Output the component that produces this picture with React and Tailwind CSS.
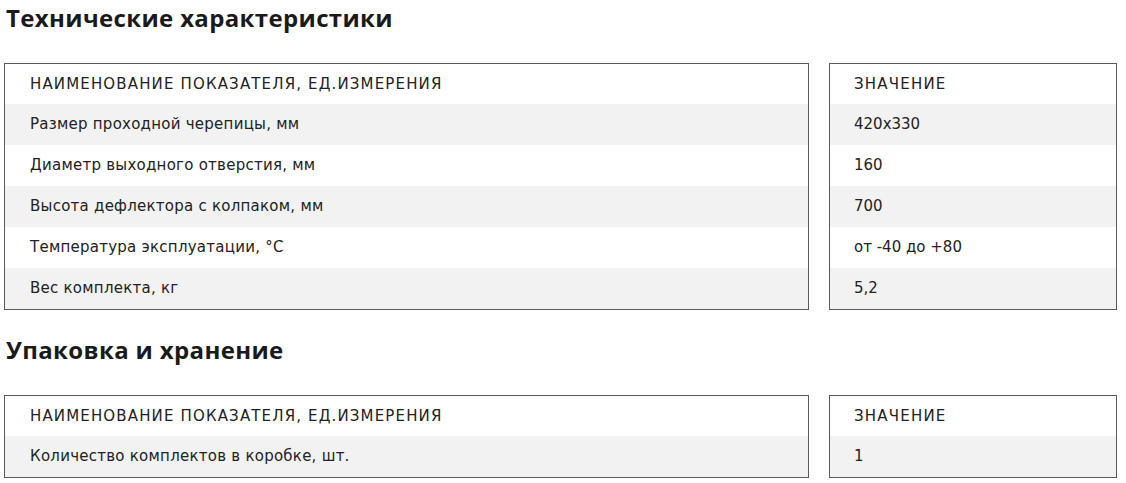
const specs = [
  ['Размер проходной черепицы, мм', '420x330'],
  ['Диаметр выходного отверстия, мм', '160'],
  ['Высота дефлектора с колпаком, мм', '700'],
  ['Температура эксплуатации, °C', 'от -40 до +80'],
  ['Вес комплекта, кг', '5,2'],
]

const pack = [['Количество комплектов в коробке, шт.', '1']]

function SpecTable({ rows }) {
  return (
    <div className="flex gap-[20px] items-start">
      <div className="w-[805px] border border-[#555a5f]">
        <div className="h-[40px] flex items-center pl-[25px] tracking-[1.15px]">НАИМЕНОВАНИЕ ПОКАЗАТЕЛЯ, ЕД.ИЗМЕРЕНИЯ</div>
        {rows.map((r, i) => (
          <div key={i} className={`h-[41px] flex items-center pl-[25px] tracking-[0.25px] ${i % 2 === 0 ? 'bg-[#f2f2f2]' : 'bg-white'}`}>
            {r[0]}
          </div>
        ))}
      </div>
      <div className="w-[288px] border border-[#555a5f]">
        <div className="h-[40px] flex items-center pl-[24px] tracking-[1.2px]">ЗНАЧЕНИЕ</div>
        {rows.map((r, i) => (
          <div key={i} className={`h-[41px] flex items-center pl-[24px] ${i % 2 === 0 ? 'bg-[#f2f2f2]' : 'bg-white'}`}>
            {r[1]}
          </div>
        ))}
      </div>
    </div>
  )
}

export default function App() {
  return (
    <div className="bg-white w-[1126px] h-[483px] overflow-hidden pl-[4px] text-[#222222] text-[15px]" style={{ fontFamily: '"DejaVu Sans", "Noto Sans", sans-serif' }}>
      <h2 className="text-[24px] font-bold leading-[36px] pl-[2px] tracking-[0.35px] text-[#1a1a1a]" style={{ fontFamily: '"Open Sans", sans-serif' }}>Технические характеристики</h2>
      <div className="mt-[27px]">
        <SpecTable rows={specs} />
      </div>
      <h2 className="text-[24px] font-bold leading-[36px] pl-[2px] mt-[22px] tracking-[0.35px] text-[#1a1a1a]" style={{ fontFamily: '"Open Sans", sans-serif' }}>Упаковка и хранение</h2>
      <div className="mt-[27px]">
        <SpecTable rows={pack} />
      </div>
    </div>
  )
}
